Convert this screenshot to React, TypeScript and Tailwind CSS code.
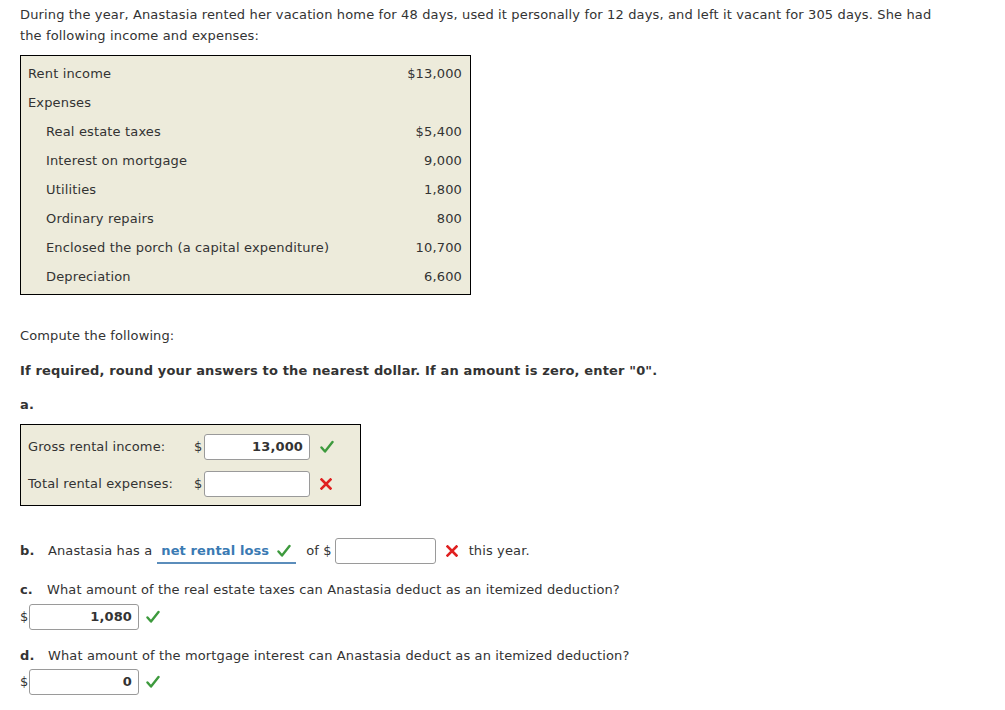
import React from 'react';

const rows: { label: string; value: string; indent?: boolean }[] = [
  { label: 'Rent income', value: '$13,000' },
  { label: 'Expenses', value: '' },
  { label: 'Real estate taxes', value: '$5,400', indent: true },
  { label: 'Interest on mortgage', value: '9,000', indent: true },
  { label: 'Utilities', value: '1,800', indent: true },
  { label: 'Ordinary repairs', value: '800', indent: true },
  { label: 'Enclosed the porch (a capital expenditure)', value: '10,700', indent: true },
  { label: 'Depreciation', value: '6,600', indent: true },
];

const Check = () => (
  <svg width="14" height="14" viewBox="0 0 14 14" className="shrink-0">
    <path d="M1.5 7.5 L5 11.5 L12.5 2" fill="none" stroke="#3d9a3d" strokeWidth="2.4" strokeLinecap="round" strokeLinejoin="round" />
  </svg>
);

const Cross = () => (
  <svg width="12" height="12" viewBox="0 0 12 12" className="shrink-0">
    <path d="M1.5 1.5 L10.5 10.5 M10.5 1.5 L1.5 10.5" fill="none" stroke="#e02020" strokeWidth="2.6" strokeLinecap="square" />
  </svg>
);

const Field = ({ value, width }: { value?: string; width: string }) => (
  <div
    className={`${width} h-[26px] bg-white border border-[#9a9a9a] rounded-[3px] flex items-center justify-end px-[6px] font-bold text-[#333]`}
  >
    {value}
  </div>
);

export default function App() {
  return (
    <div
      className="w-[1005px] h-[710px] bg-white text-[#333] text-[13px] px-[20px] pt-[4px] tracking-[0.12px]"
      style={{ fontFamily: '"DejaVu Sans", Verdana, sans-serif' }}
    >
      <p className="leading-[21px] max-w-[935px] tracking-[0.14px]">
        During the year, Anastasia rented her vacation home for 48 days, used it personally for 12 days, and left it vacant for 305 days. She had the following income and expenses:
      </p>

      <div className="mt-[9px] w-[451px] border border-black bg-[#edebdb] pt-[3px] pb-[3px] tracking-[0.15px]">
        {rows.map((r) => (
          <div key={r.label} className="h-[29px] flex items-center justify-between pr-[8px] pl-[7px]">
            <span className={r.indent ? 'pl-[18px]' : ''}>{r.label}</span>
            <span>{r.value}</span>
          </div>
        ))}
      </div>

      <p className="mt-[30px] leading-[21px]">Compute the following:</p>
      <p className="mt-[14px] leading-[21px] font-bold tracking-[0.15px]">
        If required, round your answers to the nearest dollar. If an amount is zero, enter "0".
      </p>
      <p className="mt-[13px] leading-[21px] font-bold">a.</p>

      <div className="mt-[9px] w-[341px] h-[82px] border border-black bg-[#edebdb] flex flex-col justify-center gap-[11px] pl-[7px]">
        <div className="flex items-center">
          <span className="w-[166px]">Gross rental income:</span>
          <span className="w-[10px]">$</span>
          <Field value="13,000" width="w-[106px]" />
          <span className="ml-[10px]"><Check /></span>
        </div>
        <div className="flex items-center">
          <span className="w-[166px]">Total rental expenses:</span>
          <span className="w-[10px]">$</span>
          <Field width="w-[106px]" />
          <span className="ml-[10px]"><Cross /></span>
        </div>
      </div>

      <div className="mt-[32px] flex items-center h-[26px]">
        <span className="font-bold w-[28px]">b.</span>
        <span>Anastasia has a</span>
        <span className="ml-[5px] flex items-center gap-[8px] pl-[4px] pr-[5px] border-b-2 border-[#5b8dbb] h-[26px] pt-[1px] text-[#3a7ab3] font-bold">
          net rental loss <Check />
        </span>
        <span className="ml-[10px] mr-[3px]">of $</span>
        <Field width="w-[101px]" />
        <span className="ml-[10px]"><Cross /></span>
        <span className="ml-[11px]">this year.</span>
      </div>

      <div className="mt-[15px] flex items-center leading-[21px]">
        <span className="font-bold w-[27px]">c.</span>
        <span>What amount of the real estate taxes can Anastasia deduct as an itemized deduction?</span>
      </div>
      <div className="mt-[4px] flex items-center">
        <span className="w-[9px]">$</span>
        <Field value="1,080" width="w-[110px]" />
        <span className="ml-[7px]"><Check /></span>
      </div>

      <div className="mt-[15px] flex items-center leading-[21px]">
        <span className="font-bold w-[28px]">d.</span>
        <span>What amount of the mortgage interest can Anastasia deduct as an itemized deduction?</span>
      </div>
      <div className="mt-[3px] flex items-center">
        <span className="w-[9px]">$</span>
        <Field value="0" width="w-[110px]" />
        <span className="ml-[7px]"><Check /></span>
      </div>
    </div>
  );
}
